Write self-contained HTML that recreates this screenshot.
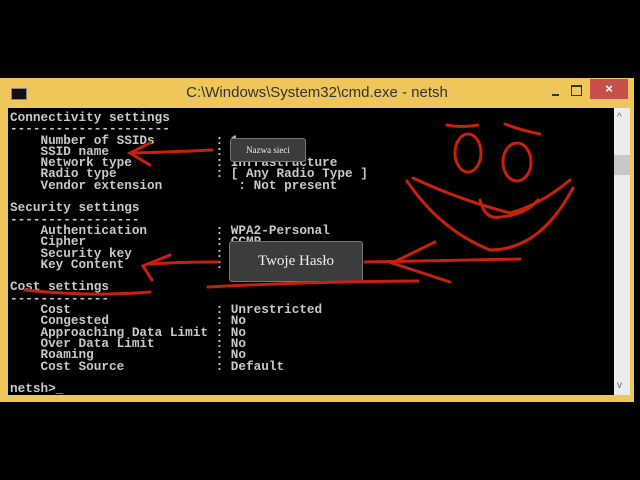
<!DOCTYPE html>
<html><head><meta charset="utf-8"><style>
body{margin:0;width:640px;height:480px;background:#000;position:relative;overflow:hidden}
.frame{position:absolute;left:0;top:78px;width:634px;height:324px;background:#eec65a}
.title{position:absolute;left:0;top:78px;width:634px;height:30px;font:15px "Liberation Sans",sans-serif;color:#333;text-align:center;line-height:30px}
.con{position:absolute;left:8px;top:108px;width:606px;height:287px;background:#000}
.sb{position:absolute;left:614px;top:108px;width:16px;height:287px;background:#ececec}
.thumb{position:absolute;left:614px;top:155px;width:16px;height:20px;background:#c8c8c8}
pre{position:absolute;left:10px;top:112px;margin:0;font:bold 12.7px/11.3px "Liberation Mono",monospace;color:#c8c8c8}
.x{position:absolute;left:590px;top:79px;width:38px;height:20px;background:#c7504a;color:#fff;font:bold 13px "Liberation Sans",sans-serif;text-align:center;line-height:20px}
.tip{position:absolute;background:#3c3c3c;border:1px solid #777;color:#eee;font-family:"Liberation Serif",serif;text-align:center;border-radius:3px}
</style></head><body>
<div class="frame"></div>
<div class="title">C:\Windows\System32\cmd.exe - netsh</div>
<div style="position:absolute;left:11px;top:88px;width:14px;height:10px;background:#111;border:1px solid #888"></div>
<div style="position:absolute;left:552px;top:94px;width:7px;height:2px;background:#333"></div>
<div style="position:absolute;left:571px;top:85px;width:9px;height:8px;border:1px solid #333;border-top-width:2px"></div>
<div class="x">×</div>
<div class="con"></div>
<div class="sb"></div><div class="thumb"></div>
<div style="position:absolute;left:617px;top:112px;color:#666;font:10px sans-serif">^</div>
<div style="position:absolute;left:617px;top:380px;color:#666;font:10px sans-serif">v</div>
<pre>Connectivity settings
---------------------
    Number of SSIDs        : 1
    SSID name              :
    Network type           : Infrastructure
    Radio type             : [ Any Radio Type ]
    Vendor extension          : Not present

Security settings
-----------------
    Authentication         : WPA2-Personal
    Cipher                 : CCMP
    Security key           :
    Key Content            :

Cost settings
-------------
    Cost                   : Unrestricted
    Congested              : No
    Approaching Data Limit : No
    Over Data Limit        : No
    Roaming                : No
    Cost Source            : Default

netsh>_</pre>
<div class="tip" style="left:230px;top:138px;width:74px;height:22px;font-size:9px;line-height:22px">Nazwa sieci</div>
<div class="tip" style="left:229px;top:241px;width:132px;height:39px;font-size:15px;line-height:39px">Twoje Hasło</div>
<svg style="position:absolute;left:0;top:0" width="640" height="480" fill="none" stroke="#c8200c" stroke-width="3" stroke-linecap="round">
<path d="M212 150 Q170 152 132 153 M150 143 L130 153 L150 165"/>
<path d="M218 262 Q180 262 150 264 M170 255 L143 266 L152 280 M25 290 Q90 297 150 292"/>
<path d="M365 262 L520 259 M435 242 L392 263 L450 282 M208 287 Q300 282 418 281"/>
<path d="M447 125 Q460 128 478 125 M505 124 Q520 130 540 134"/>
<ellipse cx="468" cy="153" rx="13" ry="19"/><ellipse cx="517" cy="162" rx="14" ry="19"/>
<path d="M407 181 Q440 230 490 250 Q540 250 573 188 M413 178 Q460 200 510 213 Q540 205 570 180 M480 200 Q485 220 500 217 Q525 215 538 200"/>
</svg>
</body></html>
